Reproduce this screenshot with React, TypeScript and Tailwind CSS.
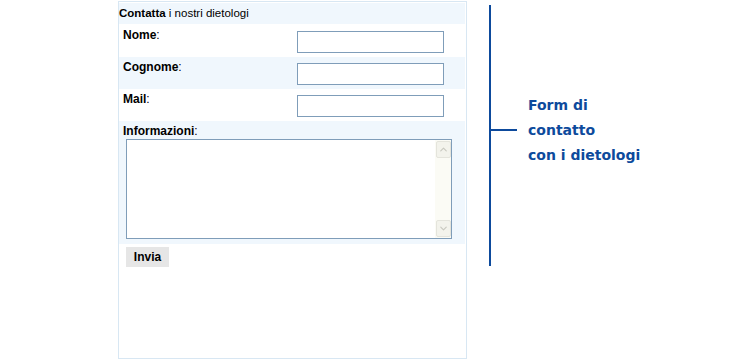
import { ChevronDown, ChevronUp } from "lucide-react";

const font = { fontFamily: '"Liberation Sans", Arial, sans-serif' };

function FieldRow({ label, shaded }: { label: string; shaded?: boolean }) {
  return (
    <div className={`flex h-[32px] ${shaded ? "bg-[#f0f7fd]" : "bg-white"}`}>
      <label className="pl-[4px] pt-[4px] text-[12px] leading-[13px] text-black">
        <span className="font-bold">{label}</span>:
      </label>
      <input
        type="text"
        className="ml-auto mr-[21px] mt-[6px] h-[22px] w-[147px] border border-[#7f9db9] bg-white outline-none"
      />
    </div>
  );
}

function ScrollButton({ down }: { down?: boolean }) {
  return (
    <div className="flex h-[17px] w-[15px] items-center justify-center rounded-[2px] border border-[#e4e4dc] bg-[#f3f3ec]">
      {down ? (
        <ChevronDown size={11} strokeWidth={2.5} className="text-[#c9c9c0]" />
      ) : (
        <ChevronUp size={11} strokeWidth={2.5} className="text-[#c9c9c0]" />
      )}
    </div>
  );
}

export default function App() {
  return (
    <div className="flex h-[359px] w-[740px] bg-white" style={font}>
      {/* contact panel */}
      <div className="ml-[118px] mt-[1px] h-[358px] w-[349px] border border-[#d8e7f3] pr-[1px] pt-[1px]">
        <div className="flex h-[21px] items-center bg-[#f0f7fd] text-[11.5px] text-black">
          <span className="font-bold">Contatta</span>
          <span>&nbsp;i nostri dietologi</span>
        </div>
        <div className="h-[1px]" />
        <FieldRow label="Nome" />
        <FieldRow label="Cognome" shaded />
        <FieldRow label="Mail" />
        <div className="h-[123px] bg-[#f0f7fd] pt-[4px]">
          <label className="block pl-[4px] text-[12px] leading-[13px] text-black">
            <span className="font-bold">Informazioni</span>:
          </label>
          <div className="ml-[7px] mt-[1px] flex h-[100px] w-[326px] border border-[#7f9db9] bg-white">
            <textarea className="flex-1 resize-none bg-white outline-none" />
            <div className="flex w-[16px] flex-col justify-between bg-[#fbfbf5] p-[1px]">
              <ScrollButton />
              <ScrollButton down />
            </div>
          </div>
        </div>
        <button
          type="button"
          className="ml-[7px] mt-[3px] flex h-[20px] w-[43px] items-center justify-center bg-[#e6e6e6] text-[12px] font-bold text-black"
        >
          Invia
        </button>
      </div>

      {/* annotation */}
      <div className="ml-[22px] mt-[5px] flex h-[261px] border-l-2 border-[#0d4a9c]">
        <div className="mt-[124px] h-[2px] w-[26px] bg-[#0d4a9c]" />
        <div
          className="ml-[11px] mt-[88px] text-[14px] font-bold leading-[25px] text-[#0d4a9c]"
          style={{ fontFamily: '"DejaVu Sans", Verdana, sans-serif' }}
        >
          Form di
          <br />
          contatto
          <br />
          con i dietologi
        </div>
      </div>
    </div>
  );
}
